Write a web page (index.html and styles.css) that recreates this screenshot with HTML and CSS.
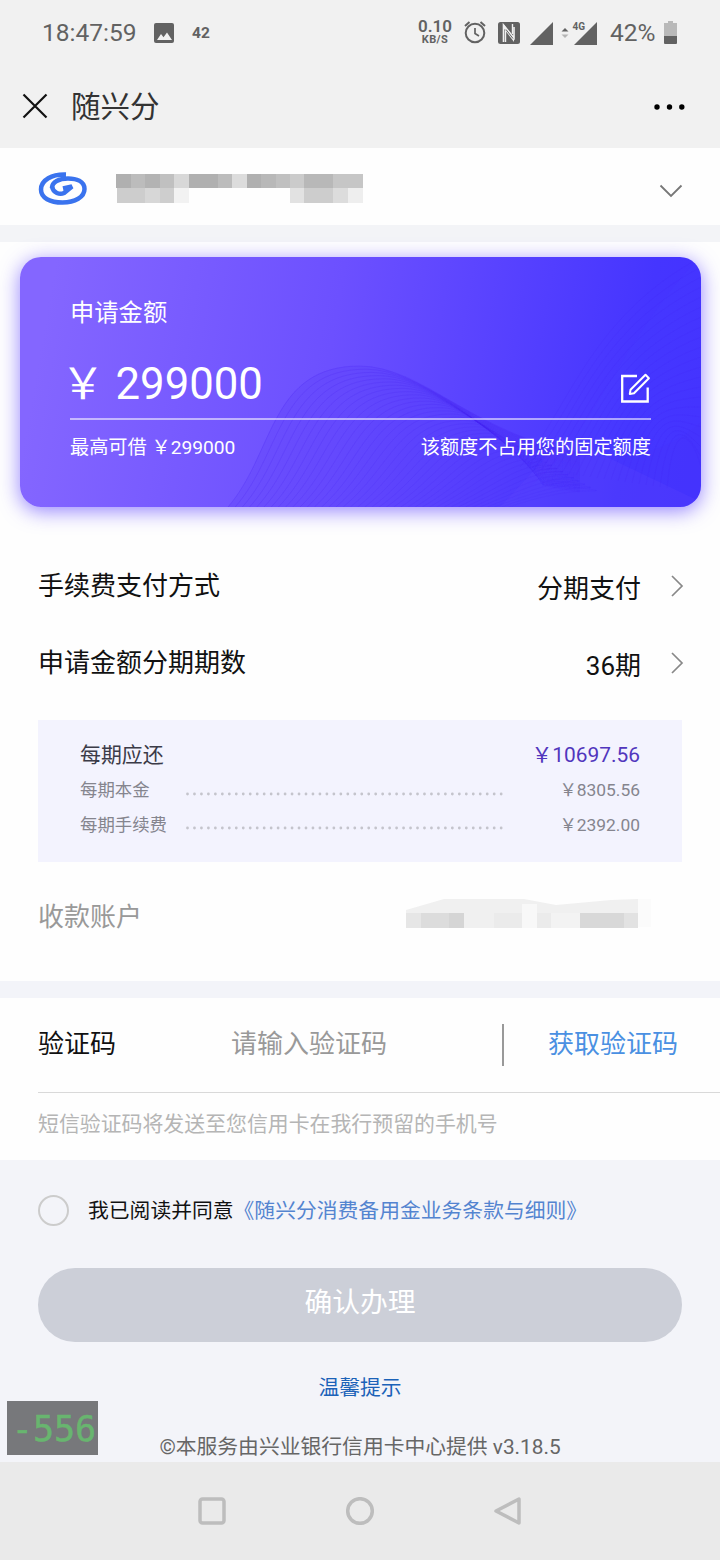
FILE: index.html
```html
<!DOCTYPE html>
<html lang="zh-CN">
<head>
<meta charset="utf-8">
<title>随兴分</title>
<link rel="stylesheet" href="styles.css">
</head>
<body>
<div class="phone">
  <div class="status">
    <span class="clock">18:47:59</span>
    <svg class="pic-icon" width="20" height="20" viewBox="0 0 20 20"><rect width="20" height="20" rx="2" fill="#626262"/><path d="M3 17l4-6 2.5 3.2L13 9.500l5 7.500z" fill="#f1f1f1"/></svg>
    <span class="notif">42</span>
    <span class="speed"><b>0.10</b><small>KB/S</small></span>
    <svg class="alarm" width="22" height="24" viewBox="0 0 22 24" fill="none" stroke="#626262"><circle cx="11" cy="13" r="9.300" stroke-width="2"/><path d="M11 8v5.500l4 2.500" stroke-width="1.700"/><path d="M1 6l4.500-4M21 6l-4.500-4" stroke-width="2"/></svg>
    <svg class="nfc" width="22" height="22" viewBox="0 0 22 22"><rect width="22" height="22" rx="2.500" fill="#626262"/><path d="M5.500 20V3l10.500 13V5" fill="none" stroke="#f1f1f1" stroke-width="1.600"/><path d="M5.500 2l10.500 14v4L5.500 6z" fill="#f1f1f1"/><path d="M7.500 8.500V20M14.500 2v10" stroke="#f1f1f1" stroke-width="1.400"/><path d="M8 7.500l7 9" stroke="#626262" stroke-width="1"/></svg>
    <svg class="signal" width="23" height="23" viewBox="0 0 23 23"><path d="M23 0v23H0z" fill="#626262"/></svg>
    <svg class="signal-data" width="37" height="25" viewBox="0 0 37 25"><path d="M37 2v23H14zM1.500 11.500L5 8l3.500 3.500z" fill="#626262"/><path d="M1.500 14.500h7L5 18z" fill="#b5b5b5"/><text x="12.500" y="9.500" class="net">4G</text></svg>
    <span class="battery-text">42%</span>
    <svg class="battery" width="13" height="23" viewBox="0 0 13 23"><path d="M4 0h5v2h4v13H0V2h4z" fill="#b9b9b9"/><path d="M0 15h13v7q0 1-1 1H1q-1 0-1-1z" fill="#626262"/></svg>
  </div>

  <header class="titlebar">
    <svg class="close" width="26" height="26" viewBox="0 0 26 26"><path d="M1.500 1.500l23 23M24.500 1.500l-23 23" stroke="#111" stroke-width="2.200"/></svg>
    <h1>随兴分</h1>
    <svg class="more" width="32" height="6" viewBox="0 0 32 6"><circle cx="3" cy="3" r="2.700"/><circle cx="15.500" cy="3" r="2.700"/><circle cx="27.800" cy="3" r="2.700"/></svg>
  </header>

  <section class="account">
    <svg class="logo" width="50" height="34" viewBox="0 0 50 34" fill="none" stroke="#3a73ee"><path d="M28 2.500C14 2 3 8 3 17.500C3 26 12 30.500 24.500 30.500C37 30.500 46.500 25 46.500 17C46.500 9 38 6.500 30 6.500C21 6.500 14 10 14 16" stroke-width="4.500"/><path d="M14 14.500C15 21 22 23 26 21L34 14.500L25 16.500" stroke-width="4.500"/></svg>
    <svg class="mask" width="248" height="30" viewBox="0 0 248 30" shape-rendering="crispEdges">
      <path d="M0 0h15v14H0z" fill="#b0b0b0"/><path d="M15 0h14v14H15z" fill="#bcbcbc"/><path d="M29 0h15v14H29z" fill="#b3b3b3"/><path d="M44 0h14v14H44z" fill="#c0c0c0"/><path d="M58 0h15v14H58z" fill="#d8d8d8"/><path d="M73 0h29v14H73z" fill="#b0b0b0"/><path d="M102 0h14v14h-14z" fill="#bcbcbc"/><path d="M116 0h15v14h-15z" fill="#dcdcdc"/><path d="M131 0h14v14h-14z" fill="#b0b0b0"/><path d="M145 0h15v14h-15z" fill="#b8b8b8"/><path d="M160 0h14v14h-14z" fill="#c0c0c0"/><path d="M174 0h14v14h-14z" fill="#cbcbcb"/><path d="M188 0h29v14h-29z" fill="#b8b8b8"/><path d="M217 0h30v14h-30z" fill="#c6c6c6"/>
      <path d="M1 14h28v15H1z" fill="#cdcdcd"/><path d="M29 14h15v15H29z" fill="#d7d7d7"/><path d="M44 14h14v15H44z" fill="#cecece"/><path d="M58 14h15v15H58z" fill="#f2f2f2"/><path d="M174 14h14v15h-14z" fill="#e2e2e2"/><path d="M188 14h29v15h-29z" fill="#cdcdcd"/><path d="M217 14h15v15h-15z" fill="#dcdcdc"/><path d="M232 14h15v15h-15z" fill="#eee"/>
    </svg>
    <svg class="down" width="24" height="14" viewBox="0 0 24 14"><path d="M1.500 1.500L12 12L22.500 1.500" fill="none" stroke="#777" stroke-width="1.800"/></svg>
  </section>

  <section class="loan">
    <div class="card">
      <svg class="waves" width="681" height="250" viewBox="0 0 681 250">
        <path d="M208 250C255 195 250 108 340 109C410 110 450 178 560 196C600 203 640 200 681 165V250z" fill="#4a28f0" fill-opacity=".14"/>
        <path d="M470 250C560 225 590 90 681 0V250z" fill="#4a48ff" fill-opacity=".12"/>
        <path d="M480 250L545 180L681 245V250z" fill="#6a50ff" fill-opacity=".18"/>
        <g id="lines" fill="none" stroke="#4520f0" stroke-opacity=".22"></g>
      </svg>
      <div class="card-body">
        <div class="card-label">申请金额</div>
        <div class="amount-row">
          <span class="amount">￥ 299000</span>
          <svg class="edit" width="31" height="31" viewBox="0 0 31 31" fill="none" stroke="#fff" stroke-width="2.300"><path d="M17 3H2.200v25.500h25.500V14.500"/><path d="M25.500 1.800l3.400 3.400L14 20.200l-4.200.8.700-4.200z" stroke-width="2" stroke-linejoin="round"/></svg>
        </div>
        <div class="card-foot"><span>最高可借 ￥299000</span><span>该额度不占用您的固定额度</span></div>
      </div>
    </div>

    <div class="row"><span>手续费支付方式</span><span class="value">分期支付</span><svg class="next" width="14" height="24" viewBox="0 0 14 24"><path d="M2 2l10 10L2 22" fill="none" stroke="#888" stroke-width="1.700"/></svg></div>
    <div class="row"><span>申请金额分期期数</span><span class="value">36期</span><svg class="next" width="14" height="24" viewBox="0 0 14 24"><path d="M2 2l10 10L2 22" fill="none" stroke="#888" stroke-width="1.700"/></svg></div>

    <div class="detail">
      <div class="line total"><span>每期应还</span><b>￥10697.56</b></div>
      <div class="line sub"><span class="name">每期本金</span><svg class="dots" width="320" height="4"><path d="M2.500 2H320" stroke="#c4c4cc" stroke-width="2.800" stroke-linecap="round" stroke-dasharray="0 6.970"/></svg><b>￥8305.56</b></div>
      <div class="line sub"><span class="name">每期手续费</span><svg class="dots" width="320" height="4"><path d="M2.500 2H320" stroke="#c4c4cc" stroke-width="2.800" stroke-linecap="round" stroke-dasharray="0 6.970"/></svg><b>￥2392.00</b></div>
    </div>

    <div class="payee">
      <span>收款账户</span>
      <svg class="mask2" width="248" height="30" viewBox="0 0 248 30">
        <path d="M0 11L38 0H118L150 6L205 1L232 0V29H0z" fill="#f0f0f0"/>
        <g shape-rendering="crispEdges"><path d="M0 14h15v15H0z" fill="#e6e6e6"/><path d="M15 14h28v15H15z" fill="#dcdcdc"/><path d="M43 14h15v15H43z" fill="#d5d5d5"/><path d="M58 14h30v15H58z" fill="#f0f0f0"/><path d="M88 14h28v15H88z" fill="#ebebeb"/><path d="M116 5h15v24h-15z" fill="#f8f8f8"/><path d="M131 14h14v15h-14z" fill="#ebebeb"/><path d="M145 14h29v15h-29z" fill="#f3f3f3"/><path d="M174 14h44v15h-44z" fill="#d8d8d8"/><path d="M218 14h14v15h-14z" fill="#e2e2e2"/><path d="M232 0h13v28h-13z" fill="#fbfbfb"/></g>
      </svg>
    </div>
  </section>

  <section class="verify">
    <div class="code">
      <label>验证码</label><span class="placeholder">请输入验证码</span><i class="bar"></i><a class="get">获取验证码</a>
    </div>
    <p class="hint">短信验证码将发送至您信用卡在我行预留的手机号</p>
  </section>

  <section class="bottom">
    <div class="agree"><i class="radio"></i><span>我已阅读并同意<a>《随兴分消费备用金业务条款与细则》</a></span></div>
    <button class="submit">确认办理</button>
    <a class="tip">温馨提示</a>
    <p class="copyright">©本服务由兴业银行信用卡中心提供 v3.18.5</p>
    <div class="counter">-556</div>
  </section>

  <nav class="nav">
    <svg width="28" height="28" viewBox="0 0 28 28"><rect x="2" y="2" width="24" height="24" rx="2.500"/></svg>
    <svg width="28" height="28" viewBox="0 0 28 28"><circle cx="14" cy="14" r="12.300"/></svg>
    <svg width="28" height="28" viewBox="0 0 28 28"><path d="M25 2v24L2 14z"/></svg>
  </nav>
</div>
<script src="waves.js"></script>
</body>
</html>
```
FILE: waves.js
```js
// Fine contour lines of the card background.
var lines = document.getElementById('lines');
var NS = 'http://www.w3.org/2000/svg';
function add(d, opacity) {
  var p = document.createElementNS(NS, 'path');
  p.setAttribute('d', d);
  p.setAttribute('stroke-opacity', opacity);
  lines.appendChild(p);
}
for (var i = 0; i < 40; i++) {
  var x = 208 + i * 7.2, y = 109 + i * 3.2;
  add('M' + x + ' 250C' + (x + 47) + ' ' + (195 + i) + ' ' + (250 + i * 8) + ' ' + y + ' ' + (340 + i * 6) + ' ' + y +
    'C' + (400 + i * 5) + ' ' + y + ' 460 ' + (180 + i) + ' 560 ' + (196 + i), 0.2 - i * 0.003);
}
for (var j = 0; j < 22; j++) {
  add('M' + (500 + j * 7) + ' ' + (210 + j) + 'C' + (550 + j * 5) + ' 150 ' + (570 + j * 5) + ' ' + (60 + j * 6) + ' 681 ' + j * 10, 0.1);
}
```
FILE: styles.css
```css
* { box-sizing: border-box; }
body { margin: 0; font-family: Roboto, "Noto Sans CJK SC", sans-serif; }
svg { display: block; flex: none; }
h1, p { margin: 0; font-weight: 400; }
.phone { width: 720px; height: 1560px; background: #fefefe; overflow: hidden; display: flex; flex-direction: column; }

.status { height: 66px; flex: none; background: #f1f1f1; color: #626262; display: flex; align-items: center; padding-left: 42px; }
.clock { width: 112px; font-size: 24.500px; line-height: 30px; }
.notif { font-size: 15.500px; font-weight: 700; margin-left: 18px; width: 227px; }
.speed { width: 32px; display: flex; flex-direction: column; align-items: center; margin-top: -2px; }
.speed b { font-size: 17px; line-height: 15px; font-weight: 600; }
.speed small { font-size: 11px; line-height: 12px; font-weight: 700; letter-spacing: .4px; }
.alarm { margin-left: 13px; margin-top: -3px; }
.nfc { margin-left: 12px; }
.signal { margin-left: 10px; }
.signal-data { margin-left: 7px; margin-top: -2px; }
.net { font: 700 10px Roboto, sans-serif; fill: #626262; stroke: #f1f1f1; stroke-width: 2px; paint-order: stroke; }
.battery-text { font-size: 24.500px; line-height: 30px; margin-left: 13px; width: 54px; }
.battery { margin-top: -2px; }

.titlebar { height: 82px; flex: none; background: #f1f1f1; display: flex; align-items: center; padding: 0 34px 0 22px; }
.titlebar h1 { font-size: 29.500px; line-height: 40px; color: #333; margin: -1px auto 0 23px; }
.close { margin-top: -2px; }

.account { height: 77px; flex: none; display: flex; align-items: center; padding: 0 38px; background: #fefefe; }
.logo { margin-top: 5px; }
.mask { margin: 4px auto 0 28px; }
.down { margin-top: 8px; margin-right: -1px; }

.loan { height: 756px; flex: none; border-top: 17px solid #f3f4f7; padding: 15px 38px 0; }
.card { position: relative; width: 681px; height: 250px; margin-left: -18px; border-radius: 21px; overflow: visible; background: linear-gradient(100deg, #8466ff 5%, #6c50ff 45%, #4535ff 88%, #4431ff); box-shadow: 0 4px 20px rgba(92, 66, 255, .65); color: #fff; }
.waves { position: absolute; inset: 0; border-radius: 21px; }
.card-body { position: relative; padding: 38px 50px 0; }
.card-label { font-size: 24.300px; line-height: 36px; }
.amount-row { display: flex; justify-content: space-between; height: 89px; border-bottom: 2px solid rgba(255, 255, 255, .55); }
.amount { font-size: 43.700px; line-height: 60px; margin: 23px 0 0 -9px; white-space: pre; }
.edit { margin-top: 42px; }
.card-foot { display: flex; justify-content: space-between; font-size: 19.200px; line-height: 28px; padding-top: 14px; }

.row { display: flex; align-items: center; height: 77px; font-size: 26px; line-height: 38px; color: #111; }
.card + .row { margin-top: 40px; }
.value { margin: 6px 29px 0 auto; }
.next { margin-right: -2px; }

.detail { margin: 19px 0 0; width: 644px; height: 142px; padding: 19px 42px 0; background: #f3f3fe; }
.line { display: flex; align-items: center; justify-content: space-between; }
.line b { font-weight: 400; }
.total { font-size: 20.900px; line-height: 32px; color: #3b3b48; }
.total b { color: #5136bd; }
.sub { font-size: 17.400px; line-height: 34.500px; height: 34.500px; color: #85858e; margin-top: 2px; }
.sub + .sub { margin-top: 0; }
.sub .name { width: 105px; }
.dots { margin-right: auto; margin-top: 7px; }

.payee { display: flex; justify-content: space-between; font-size: 26px; line-height: 38px; color: #999; padding: 36px 28px 0 0; }
.mask2 { margin-top: 1px; }

.verify { height: 179px; flex: none; border-top: 17px solid #f3f4f9; padding-left: 38px; }
.code { height: 95px; display: flex; align-items: center; border-bottom: 1px solid #d9d9d9; font-size: 26px; line-height: 38px; padding-bottom: 2px; }
.code label { width: 193px; color: #111; }
.placeholder { width: 271px; color: #999; }
.bar { width: 2px; height: 42px; background: #999; margin-top: 2px; }
.get { color: #4a90e2; margin-left: 44px; }
.hint { font-size: 20.900px; line-height: 30px; color: #b5b5b5; padding-top: 16px; }

.bottom { position: relative; height: 302px; flex: none; background: #f3f4f9; padding: 35px 38px 0; display: flex; flex-direction: column; align-items: center; }
.agree { align-self: stretch; display: flex; align-items: center; gap: 19px; height: 31px; font-size: 20.800px; line-height: 30px; color: #111; }
.agree a { color: #5484d0; }
.radio { width: 31px; height: 31px; border: 2px solid #ccc; border-radius: 50%; }
.submit { width: 644px; height: 78px; margin-top: 42px; border: 0; border-radius: 39px; background: #cccfd8; color: #fff; font: 400 27.800px/40px Roboto, "Noto Sans CJK SC", sans-serif; padding: 0 0 4px; }
.tip { font-size: 20.800px; line-height: 30px; margin-top: 31px; color: #1b62b8; }
.copyright { font-size: 20.800px; line-height: 30px; margin-top: 29px; color: #666; white-space: nowrap; }
.counter { position: absolute; left: 7px; top: 241px; width: 91px; height: 54px; background: #77787b; color: #68b56f; font: 35px/56px "DejaVu Sans Mono", monospace; text-align: center; padding-left: 3px; -webkit-text-stroke: .5px #68b56f; }

.nav { height: 98px; flex: none; background: #eaeaea; display: flex; justify-content: center; gap: 120px; align-items: center; }
.nav svg { fill: none; stroke: #bdbdbd; stroke-width: 3.500px; stroke-linejoin: round; }
```
